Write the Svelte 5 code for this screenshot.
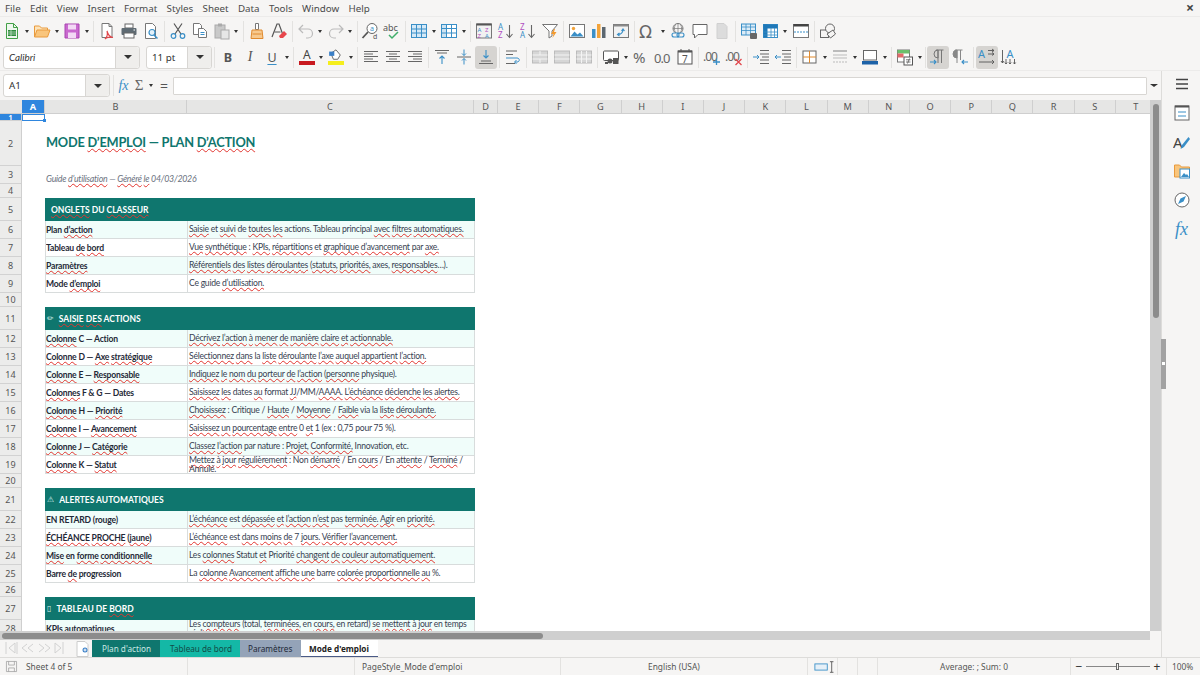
<script>
	// toolbar icons, 18x18 grid
	const icons = {
		new: '<path d="M3.500 1.500h7l4 4v11h-11z" fill="#eef7ee" stroke="#43a047"/><path d="M10.500 1.500v4h4" fill="none" stroke="#43a047"/><rect x="5" y="8" width="8" height="6" fill="#2e8b3d"/><path d="M5 10h8M5 12h8M8 8v6" stroke="#cfe8d2" stroke-width=".7"/>',
		open: '<path d="M1.500 15V4h5l2 2h6v2" fill="#fde3b8" stroke="#e99a3c"/><path d="M1.500 15 4 8h13l-2.500 7z" fill="#f9c57c" stroke="#e99a3c"/>',
		save: '<path d="M2 2h14v14H2z" fill="#c968cf" stroke="#a945b0"/><rect x="5" y="2.500" width="8" height="5" fill="#f3d9f5"/><rect x="5" y="10.500" width="8" height="5.500" fill="#f3d9f5"/>',
		pdf: '<path d="M4 1.500h7l3 3v11H4z" fill="#fff" stroke="#777"/><path d="M11 1.500v3h3" fill="none" stroke="#777"/><path d="M9 9c1 4 3 6 6 6.500-3-.5-7 0-8 1.500 2-2 3-5 2-8z" fill="none" stroke="#e0464a" stroke-width="1.200"/>',
		print: '<rect x="5" y="2" width="8" height="4" fill="#fff" stroke="#666"/><rect x="1.500" y="6" width="15" height="7" rx="1" fill="#5f6b73"/><rect x="4" y="11" width="10" height="5" fill="#fff" stroke="#666"/><path d="M13.500 8h1.500" stroke="#fff"/>',
		preview: '<path d="M3.500 1.500h7l3 3v12h-10z" fill="#fff" stroke="#777"/><circle cx="10" cy="10.500" r="3" fill="#e3f1fa" stroke="#3a8fc7" stroke-width="1.200"/><path d="m12 13 3.500 3.500" stroke="#3a8fc7" stroke-width="1.500"/>',
		cut: '<path d="M5 1.500 12 12M13 1.500 6 12" stroke="#555" stroke-width="1.200" fill="none"/><circle cx="4.500" cy="14" r="2.300" fill="none" stroke="#3a8fc7" stroke-width="1.200"/><circle cx="13.500" cy="14" r="2.300" fill="none" stroke="#3a8fc7" stroke-width="1.200"/>',
		copy: '<path d="M2.500 1.500h6l2 2v9h-8z" fill="#fff" stroke="#777"/><path d="M7.500 6.500h5l3 3v6h-8z" fill="#fff" stroke="#777"/><path d="M9.500 10.500h4M9.500 12.500h4" stroke="#3a8fc7"/>',
		paste: '<rect x="2" y="3" width="10" height="13" fill="#c9c9c9" stroke="#aaa"/><rect x="5" y="1.500" width="4" height="3" fill="#aaa"/><rect x="8" y="8" width="8" height="9" fill="#e6e6e6" stroke="#aaa"/>',
		clone: '<path d="M7.500 1.500h3v6h-3z" fill="#fff" stroke="#777"/><path d="M4 8h10l1 8.500H3z" fill="#f7c98e" stroke="#e08a2e"/><path d="M4.500 12h9" stroke="#e08a2e"/>',
		clear: '<path d="M2 15 7 2h2l4 11" fill="none" stroke="#555" stroke-width="1.200"/><path d="M4.500 10h6" stroke="#555"/><path d="m9 14 5-5 3 3-4 4h-3z" fill="#e8474c"/>',
		undo: '<path d="M6 3 2 7l4 4M2 7h9a4 4 0 0 1 0 9H9" fill="none" stroke="#bbb" stroke-width="1.200"/>',
		redo: '<path d="m12 3 4 4-4 4M16 7H7a4 4 0 0 0 0 9h2" fill="none" stroke="#bbb" stroke-width="1.200"/>',
		find: '<circle cx="11" cy="6.500" r="5" fill="#fff" stroke="#666"/><path d="M7 10 1.500 16" stroke="#555" stroke-width="1.800"/><text x="9" y="9" font-size="7" font-family="Noto Sans" fill="#3a8fc7">a</text><text x="12" y="17" font-size="7" font-family="Noto Sans" fill="#555">d</text>',
		spell: '<text x="0" y="9" font-size="9" font-family="Noto Sans" fill="#555">abc</text><path d="m6 13 3 3 6-6" fill="none" stroke="#3fae6a" stroke-width="1.500"/>',
		table: '<rect x="1.500" y="2.500" width="15" height="13" fill="#d5e9f7" stroke="#3a8fc7"/><path d="M1.500 7h15M1.500 11h15M6.500 2.500v13M11.500 2.500v13" stroke="#3a8fc7"/>',
		grid: '<rect x="1.500" y="2.500" width="15" height="13" fill="#fff" stroke="#3a8fc7"/><path d="M1.500 6.500h15M1.500 11h15M6.500 2.500v13M11.500 2.500v13" stroke="#3a8fc7"/><rect x="1.500" y="2.500" width="5" height="13" fill="#3a8fc7" opacity=".25"/>',
		sort: '<rect x="1.500" y="2" width="15" height="14" fill="#f1f1f1" stroke="#777"/><rect x="1.500" y="1.500" width="15" height="2" fill="#555"/><text x="2.500" y="10" font-size="6" font-family="Noto Sans" fill="#3a8fc7">A</text><text x="10" y="10" font-size="6" font-family="Noto Sans" fill="#b14fc0">Z</text><text x="2.500" y="15.500" font-size="6" font-family="Noto Sans" fill="#b14fc0">Z</text><text x="10" y="15.500" font-size="6" font-family="Noto Sans" fill="#3a8fc7">A</text>',
		sortaz: '<text x="1" y="8" font-size="8" font-family="Noto Sans" fill="#3a8fc7">A</text><text x="1" y="16" font-size="8" font-family="Noto Sans" fill="#b14fc0">Z</text><path d="M12.500 3v12M9.500 12l3 3.500 3-3.500" fill="none" stroke="#666" stroke-width="1.100"/>',
		sortza: '<text x="1" y="8" font-size="8" font-family="Noto Sans" fill="#b14fc0">Z</text><text x="1" y="16" font-size="8" font-family="Noto Sans" fill="#3a8fc7">A</text><path d="M12.500 3v12M9.500 12l3 3.500 3-3.500" fill="none" stroke="#666" stroke-width="1.100"/>',
		filter: '<path d="M1.500 2.500h15L11 9v5l-3 2V9z" fill="#fff" stroke="#777"/><path d="m13 7-3 5h2.500l-1 4 4-6h-2.500l1-3z" fill="#f29a2e"/>',
		image: '<rect x="1.500" y="2.500" width="15" height="13" fill="#fff" stroke="#777"/><path d="m2.500 14.500 4-5 3 3 2.500-2 3.500 4z" fill="#3a8fc7"/><circle cx="5.500" cy="6.500" r="1.700" fill="#f2a33a"/>',
		chart: '<rect x="2" y="7" width="3.500" height="9" fill="#3a8fc7"/><rect x="7" y="2" width="3.500" height="14" fill="#f2a33a"/><rect x="12" y="5" width="3.500" height="11" fill="#5c6770"/>',
		pivot: '<rect x="1.500" y="2.500" width="15" height="13" fill="#f2f2f2" stroke="#777"/><rect x="1.500" y="2.500" width="15" height="2" fill="#8a8a8a"/><path d="M6 12.500c3 0 5-2 5-5M9.500 9l1.500-2 1.500 2M7.500 11 5.500 12.500 7.500 14" fill="none" stroke="#3a8fc7" stroke-width="1.100"/>',
		omega: '<text x="0" y="15.500" font-size="17" font-family="DejaVu Sans" fill="#666">Ω</text>',
		link: '<circle cx="9" cy="6.500" r="5" fill="none" stroke="#777"/><path d="M4 6.500h10M9 1.500v10M6.500 2.500c-1.500 3-1.500 5 0 8M11.500 2.500c1.500 3 1.500 5 0 8" stroke="#777" stroke-width=".7" fill="none"/><rect x="3" y="11" width="7" height="4" rx="2" fill="#f6f5f4" stroke="#3a8fc7" stroke-width="1.100"/><rect x="8" y="11" width="7" height="4" rx="2" fill="none" stroke="#3a8fc7" stroke-width="1.100"/>',
		comment: '<path d="M2 2.500h14v10H7l-3.500 3.500v-3.500H2z" fill="#fff" stroke="#666"/>',
		headerfooter: '<path d="M4 1.500h7l3 3v12H4z" fill="#dcdcdc" stroke="#d0d0d0"/>',
		printrange: '<rect x="1.500" y="2" width="14" height="11" fill="#dcecf7" stroke="#3a8fc7"/><path d="M1.500 5h14M1.500 8.500h14M6 2v11M10.500 2v11" stroke="#3a8fc7" stroke-width=".8"/><rect x="10" y="11" width="7" height="6" rx="1" fill="#666"/>',
		freeze: '<rect x="1.500" y="2.500" width="14" height="13" fill="#fff" stroke="#3a8fc7"/><rect x="1.500" y="2.500" width="14" height="4" fill="#1f78b8"/><rect x="1.500" y="2.500" width="4" height="13" fill="#1f78b8"/><path d="M1.500 10h14M1.500 13h14M9 6v10M12.500 6v10" stroke="#3a8fc7" stroke-width=".8"/>',
		split: '<rect x="1.500" y="2.500" width="15" height="13" fill="#fff" stroke="#777"/><rect x="1.500" y="2" width="15" height="2.500" fill="#444"/><path d="M2 10h14" stroke="#3a8fc7" stroke-dasharray="2 1"/>',
		shapes: '<rect x="1.500" y="8" width="8" height="7.500" fill="none" stroke="#666"/><circle cx="11" cy="6.500" r="4.500" fill="#f6f5f4" stroke="#666"/><path d="m8 12 6-4 2.500 4-5 4z" fill="#f6f5f4" stroke="#666"/>',
		left: '<path d="M2 3.500h14M2 6h9M2 8.500h14M2 11h9M2 13.500h14" stroke="#666"/>',
		center: '<path d="M2 3.500h14M5 6h8M2 8.500h14M5 11h8M2 13.500h14" stroke="#666"/>',
		right: '<path d="M2 3.500h14M7 6h9M2 8.500h14M7 11h9M2 13.500h14" stroke="#666"/>',
		vtop: '<path d="M2 2.500h14M4 5h10" stroke="#666"/><path d="M9 16V8M6.500 10.500 9 8l2.500 2.500" fill="none" stroke="#3a8fc7" stroke-width="1.100"/>',
		vmid: '<path d="M2 9h14" stroke="#666"/><path d="M9 1.500v6M7 5.500l2 2 2-2M9 16.500v-6M7 12.500l2-2 2 2" fill="none" stroke="#3a8fc7"/>',
		vbot: '<path d="M2 15.500h14M4 13h10" stroke="#666"/><path d="M9 2v8M6.500 7.500 9 10l2.500-2.500" fill="none" stroke="#3a8fc7" stroke-width="1.100"/>',
		wrap: '<path d="M2 3h11M2 6.500h7M2 15.500h9" stroke="#666"/><path d="M2 10h11c3 0 3 4 0 4h-2M12.500 12 10.500 14l2 2" fill="none" stroke="#3a8fc7"/>',
		merge: '<rect x="1.500" y="3" width="15" height="12" fill="#d6d6d6" stroke="#bbb"/><path d="M1.500 7h15M1.500 11h15M9 3v4M9 11v4" stroke="#f4f4f4"/>',
		merge2: '<rect x="1.500" y="3" width="15" height="12" fill="#d6d6d6" stroke="#bbb"/><path d="M1.500 7h15M1.500 11h15" stroke="#f4f4f4"/>',
		merge3: '<rect x="1.500" y="3" width="15" height="12" fill="#d6d6d6" stroke="#bbb"/><path d="M1.500 7h15M1.500 11h15M6.500 3v12M11.500 3v12" stroke="#f4f4f4"/>',
		currency: '<rect x="1.500" y="3" width="15" height="9.500" rx="1" fill="#fff" stroke="#555"/><circle cx="8" cy="13" r="2.500" fill="#555"/><rect x="11" y="10" width="5.500" height="6" fill="#555"/><path d="M3 15h3" stroke="#555" stroke-width="2"/>',
		percent: '<text x="1" y="15" font-size="15" font-family="Noto Sans" fill="#666">%</text>',
		number: '<text x="0" y="14.500" font-size="13" font-family="Noto Sans" letter-spacing="-1" fill="#666">0.0</text>',
		date: '<rect x="2" y="3" width="14" height="13" fill="#fff" stroke="#555"/><rect x="2" y="2.500" width="14" height="2" fill="#555"/><path d="M5 1v3M13 1v3" stroke="#555"/><text x="6" y="14.500" font-size="10" font-family="Noto Sans" fill="#555">7</text>',
		adddec: '<text x="0" y="13" font-size="12" font-family="Noto Sans" letter-spacing="-1" fill="#666">.00</text><path d="M13.500 10.500v6.500M10 14h7" stroke="#3a8fc7" stroke-width="1.300"/>',
		deldec: '<text x="0" y="13" font-size="12" font-family="Noto Sans" letter-spacing="-1" fill="#666">.00</text><path d="m10.500 11 6 6M16.500 11l-6 6" stroke="#e2474c" stroke-width="1.300"/>',
		indent: '<path d="M8 2.500h9M8 6h9M10 9h7M8 12h9M8 15.500h9" stroke="#666"/><path d="M1 9h6M5 7l2 2-2 2" fill="none" stroke="#3a8fc7"/>',
		outdent: '<path d="M8 2.500h9M8 6h9M10 9h7M8 12h9M8 15.500h9" stroke="#666"/><path d="M7 9H1M3 7 1 9l2 2" fill="none" stroke="#3a8fc7"/>',
		borders: '<rect x="2" y="3" width="13" height="12" fill="#fff" stroke="#666"/><path d="M8.500 3v12M2 9h13" stroke="#e08a2e"/>',
		borderstyle: '<path d="M2 3h14" stroke="#bbb" stroke-width="2"/><path d="M2 7h14M2 10h14" stroke="#bbb"/><path d="M2 14h14" stroke="#bbb" stroke-dasharray="2 1"/>',
		bordercolor: '<rect x="2.500" y="2.500" width="13" height="9.500" fill="#fff" stroke="#666"/><rect x="1" y="13" width="16" height="3.500" fill="#1d62a8"/>',
		cond: '<rect x="1.500" y="2" width="12" height="12" fill="#fff" stroke="#777"/><rect x="1.500" y="2" width="12" height="3.500" fill="#6cbf6c"/><rect x="1.500" y="5.500" width="6" height="4" fill="#e26a6a"/><rect x="8" y="9" width="8.500" height="8" fill="#fff" stroke="#555"/><path d="M10 11.800h4.500M10 14h4.500M13.500 10.500l-2 5" stroke="#555" stroke-width=".8"/>',
		ltr: '<path d="M9 2v13M12.500 2v13M7 2h7.500" fill="none" stroke="#777"/><path d="M9 2a4 4 0 0 0 0 8z" fill="none" stroke="#777"/><path d="M1 14h6M5 12l2 2-2 2" fill="none" stroke="#3a8fc7" stroke-width="1.100"/>',
		rtl: '<path d="M6 2v13M9.500 2v10M4 2h7.500" fill="none" stroke="#888"/><path d="M6 2a4 4 0 0 0 0 8z" fill="#888" stroke="#888"/><path d="M17 14h-6M13 12l-2 2 2 2" fill="none" stroke="#3a8fc7" stroke-width="1.100"/>',
		horiz: '<text x="0" y="10" font-size="11" font-family="Noto Sans" fill="#3a8fc7">A</text><path d="M10 2.500h6M14 1l2 1.500L14 4M10 6h6M14 4.500 16 6l-2 1.500M1 14h15M14 12l2 2-2 2" fill="none" stroke="#555" stroke-width=".9"/>',
		vert: '<text x="6.500" y="10" font-size="11" font-family="Noto Sans" fill="#3a8fc7">A</text><path d="M2.500 2v13M1 13l1.500 2L4 13M6 11v5M4.800 14.500 6 16l1.200-1.500M10 11v5M8.800 14.500 10 16l1.200-1.500M14.500 11v5M13.300 14.500l1.200 1.500 1.200-1.500" fill="none" stroke="#555" stroke-width=".9"/>',
		deck: '<path d="M3 4.500h12M3 9h12M3 13.500h12" stroke="#444" stroke-width="1.600"/>',
		props: '<rect x="2" y="2" width="14" height="14" fill="#fff" stroke="#666"/><rect x="2" y="1.500" width="14" height="2" fill="#555"/><path d="M5 8h8M5 12h8" stroke="#3a8fc7"/>',
		styles: '<text x="0" y="15" font-size="15" font-family="Noto Sans" fill="#444">A</text><path d="m16.500 3-6.500 8-1.500 4 3.500-2 6-8z" fill="#3a8fc7" transform="translate(-1 1)"/>',
		gallery: '<path d="M1.500 15V3h5l2 2h8v10z" fill="#f9c57c" stroke="#e99a3c"/><rect x="7" y="7" width="9.500" height="9" fill="#fff" stroke="#3a8fc7"/><path d="m8 15 3-4 2 2 1-1 2 3z" fill="#3a8fc7"/>',
		navigator: '<circle cx="9" cy="9" r="7" fill="#fff" stroke="#666"/><path d="m13 5-2.500 5.500L5 13l2.500-5.500z" fill="#3a8fc7"/>',
		pagesave: '<path d="M2 2h14v14H2z" fill="none" stroke="#9a9a9a"/><path d="M5 2v5h8V2M5 16v-5h8v5" fill="none" stroke="#9a9a9a"/>'
	};

	const bar1 = ['new', '>', 'open', '>', 'save', '>', '|', 'pdf', 'print', 'preview', '|', 'cut', 'copy', 'paste', '>', '|', 'clone', 'clear', '|', 'undo', '>', 'redo', '>', '|', 'find', 'spell', '|', 'table', '>', 'grid', '>', '|', 'sort', 'sortaz', 'sortza', 'filter', '|', 'image', 'chart', 'pivot', '|', 'omega', '>', 'link', 'comment', 'headerfooter', '|', 'printrange', 'freeze', '>', 'split', '|', 'shapes'];
	const bar2a = ['left', 'center', 'right', '|', 'vtop', 'vmid', 'vbot!', '|', 'wrap', '|', 'merge', 'merge2', 'merge3', '|', 'currency', '>', 'percent', 'number', 'date', '|', 'adddec', 'deldec', '|', 'indent', 'outdent', '|', 'borders', '>', 'borderstyle', '>', 'bordercolor', '>', '|', 'cond', '>', '~', 'ltr!', 'rtl', '|', 'horiz!', 'vert'];

	const menus = ['File', 'Edit', 'View', 'Insert', 'Format', 'Styles', 'Sheet', 'Data', 'Tools', 'Window', 'Help'];
	const columns = ['E', 'F', 'G', 'H', 'I', 'J', 'K', 'L', 'M', 'N', 'O', 'P', 'Q', 'R', 'S', 'T'];

	const rowHeights = [7, 45, 18, 14, 23, 18, 18, 18, 18, 14, 23, 18, 18, 18, 18, 18, 18, 18, 18, 14, 23, 18, 18, 18, 18, 14, 23, 18];

	// *word* = flagged by the spell checker
	const sections = [
		{
			title: '*ONGLETS* DU *CLASSEUR*',
			rows: [
				['Plan *d’action*', '*Saisie* et *suivi* de *toutes* *les* actions. Tableau principal *avec* *filtres* *automatiques.*'],
				['Tableau *de* *bord*', '*Vue* *synthétique* : *KPIs,* *répartitions* et *graphique* *d’avancement* par *axe.*'],
				['*Paramètres*', '*Référentiels* *des* *listes* *déroulantes* (*statuts,* *priorités,* axes, *responsables*…).'],
				['Mode *d’emploi*', 'Ce guide *d’utilisation.*']
			]
		},
		{
			icon: '✏',
			title: '*SAISIE* *DES* ACTIONS',
			rows: [
				['*Colonne* C — Action', '*Décrivez* *l’action* *à* *mener* *de* *manière* *claire* *et* *actionnable.*'],
				['*Colonne* D — *Axe* *stratégique*', '*Sélectionnez* *dans* la *liste* *déroulante* *l’axe* *auquel* *appartient* *l’action.*'],
				['*Colonne* E — *Responsable*', '*Indiquez* *le* *nom* *du* *porteur* *de* *l’action* (*personne* physique).'],
				['*Colonnes* F & G — Dates', '*Saisissez* *les* dates *au* format *JJ*/MM/*AAAA.* *L’échéance* *déclenche* *les* *alertes.*'],
				['*Colonne* H — *Priorité*', '*Choisissez* : Critique / *Haute* / *Moyenne* / *Faible* via la *liste* *déroulante.*'],
				['*Colonne* I — *Avancement*', '*Saisissez* *un* *pourcentage* *entre* 0 *et* 1 (ex : 0,75 pour 75 %).'],
				['*Colonne* J — *Catégorie*', '*Classez* *l’action* par nature : *Projet,* *Conformité,* Innovation, etc.'],
				['*Colonne* K — *Statut*', '*Mettez* *à* *jour* *régulièrement* : Non *démarré* / En *cours* / En *attente* / *Terminé* / *Annulé.*']
			]
		},
		{
			icon: '⚠',
			title: 'ALERTES AUTOMATIQUES',
			rows: [
				['EN RETARD (rouge)', '*L’échéance* est *dépassée* *et* *l’action* *n’est* pas *terminée.* *Agir* en *priorité.*'],
				['*ÉCHÉANCE* *PROCHE* (*jaune*)', '*L’échéance* est *dans* *moins* *de* 7 *jours.* *Vérifier* *l’avancement.*'],
				['*Mise* en *forme* *conditionnelle*', 'Les *colonnes* Statut *et* Priorité *changent* *de* *couleur* *automatiquement.*'],
				['Barre *de* progression', 'La *colonne* *Avancement* *affiche* *une* barre *colorée* *proportionnelle* *au* %.']
			]
		},
		{
			icon: '▯',
			title: 'TABLEAU DE *BORD*',
			rows: [
				['*KPIs* *automatiques*', 'Les *compteurs* (total, *terminées,* en *cours,* en retard) *se* *mettent* *à* *jour* en temps *réel.*']
			]
		}
	];

	const tabs = [
		{ label: 'Plan d\'action', cls: 'plan' },
		{ label: 'Tableau de bord', cls: 'board' },
		{ label: 'Paramètres', cls: 'params' },
		{ label: 'Mode d\'emploi', cls: 'active' }
	];

	function parts(text) {
		return text.split('*').map((t, i) => ({ t, bad: i % 2 === 1 }));
	}
</script>

{#snippet marked(text)}
	{#each parts(text) as p}{#if p.bad}<span class="sp">{p.t}</span>{:else}{p.t}{/if}{/each}
{/snippet}

{#snippet icon(name, cls = '')}
	<svg class={cls} viewBox="0 0 18 18" width="18" height="18" aria-hidden="true">{@html icons[name]}</svg>
{/snippet}

{#snippet toolitems(list)}
	{#each list as item}
		{#if item === '|'}
			<span class="sep"></span>
		{:else if item === '~'}
			<span class="sep narrow"></span>
		{:else if item === '>'}
			<span class="arrow"></span>
		{:else}
			<span class="tool" class:on={item.endsWith('!')}>
				{@render icon(item.replace('!', ''))}
			</span>
		{/if}
	{/each}
{/snippet}

<div class="app">
	<header class="menubar">
		<nav class="menus">
			{#each menus as m}<span>{m}</span>{/each}
		</nav>
		<span class="close">×</span>
	</header>

	<div class="toolbar first">
		{@render toolitems(bar1)}
	</div>

	<div class="toolbar second">
		<div class="combo font"><span class="value">Calibri</span><span class="drop"><i></i></span></div>
		<div class="combo size"><span class="value">11 pt</span><span class="drop"><i></i></span></div>
		<span class="sep"></span>
		<span class="tool txt bold">B</span>
		<span class="tool txt ital">I</span>
		<span class="tool txt under">U</span>
		<span class="arrow"></span>
		<span class="sep"></span>
		<span class="tool swatch">
			<span class="letter">A</span><b class="red"></b>
		</span>
		<span class="arrow"></span>
		<span class="tool swatch">
			<svg viewBox="0 0 18 14" width="16" height="12" aria-hidden="true"><path d="M3 5l6-4 5 6-3 5H6z" fill="#fff" stroke="#555"/><rect x="1" y="3" width="6" height="5" fill="#3a7fc7"/></svg>
			<b class="yellow"></b>
		</span>
		<span class="arrow"></span>
		<span class="sep"></span>
		{@render toolitems(bar2a)}
	</div>

	<div class="workspace">
		<div class="left">
			<div class="formula">
				<div class="combo name"><span class="value">A1</span><span class="drop"><i></i></span></div>
				<span class="sep"></span>
				<span class="fx">fx</span>
				<span class="sigma">Σ</span>
				<span class="arrow"></span>
				<span class="equals">=</span>
				<div class="input"></div>
				<span class="arrow wide"></span>
			</div>

			<div class="sheetarea">
				<div class="grid">
					<div class="colheads">
						<span class="corner"></span>
						<span class="ch sel cola">A</span>
						<span class="ch colb">B</span>
						<span class="ch colc">C</span>
						<span class="ch cold">D</span>
						{#each columns as c}<span class="ch">{c}</span>{/each}
					</div>
					<div class="body">
						<div class="rowheads">
							{#each rowHeights as h, i}
								<span class="rh" class:sel={i === 0} style="height: {h}px">{i + 1}</span>
							{/each}
						</div>
						<div class="cells">
							<div class="cursor"></div>
							<h1 class="title">
								MODE <span class="sp">D’EMPLOI</span> — PLAN <span class="sp">D’ACTION</span>
							</h1>
							<p class="subtitle">Guide <span class="sp">d’utilisation</span> — <span class="sp">Généré</span> <span class="sp">le</span> 04/03/2026</p>
							{#each sections as s}
								<section class="block">
									<div class="band">
										{#if s.icon}<span class="glyph">{s.icon}</span>{/if}
										<span>{@render marked(s.title)}</span>
									</div>
									{#each s.rows as row}
										<div class="row">
											<div class="label">{@render marked(row[0])}</div>
											<div class="desc"><span>{@render marked(row[1])}</span></div>
										</div>
									{/each}
								</section>
							{/each}
						</div>
					</div>
				</div>
				<div class="vscroll"><span class="thumb"></span></div>
			</div>

			<div class="hscroll"><span class="thumb"></span></div>

			<div class="tabbar">
				<div class="nav">
					<svg viewBox="0 0 62 14" width="62" height="14" aria-hidden="true">
						<g fill="none" stroke="#d2d2d2">
							<path d="M1 1v12M10 2 4 7l6 5zM12 1v12"/>
							<path d="M22 3l-5 4 5 4M28 3l-5 4 5 4"/>
							<path d="M34 3l5 4-5 4M40 3l5 4-5 4"/>
							<path d="M50 2l6 5-6 5zM58 1v12"/>
						</g>
					</svg>
				</div>
				<div class="addsheet">
					<svg viewBox="0 0 16 16" width="16" height="16" aria-hidden="true"><path d="M2 .5h8l3 3v12H2z" fill="#fff" stroke="#ccc"/><circle cx="10" cy="9" r="2.500" fill="#3a7fc7"/><path d="M8.500 9h3M10 7.500v3" stroke="#fff"/></svg>
				</div>
				{#each tabs as tab}
					<span class="tab {tab.cls}">{tab.label}</span>
				{/each}
			</div>
		</div>

		<aside class="sidebar">
			<span class="handle"></span>
			{@render icon('deck')}
			{@render icon('props')}
			{@render icon('styles')}
			{@render icon('gallery')}
			{@render icon('navigator')}
			<span class="side-fx">fx</span>
		</aside>
	</div>

	<footer class="status">
		<span class="st s1">{@render icon('pagesave', 'small')}<span>Sheet 4 of 5</span></span>
		<span class="st s2"></span>
		<span class="st s3">PageStyle_Mode d'emploi</span>
		<span class="st s4">English (USA)</span>
		<span class="st s5">
			<svg viewBox="0 0 26 14" width="26" height="14" aria-hidden="true"><rect x="1" y="3.500" width="14" height="7" fill="#e6f0f8" stroke="#3a8fc7"/><path d="M18 1h4M20 1v12M18 13h4" stroke="#555" fill="none"/></svg>
		</span>
		<span class="st s6"></span>
		<span class="st s6"></span>
		<span class="st s7">Average: ; Sum: 0</span>
		<span class="st s8">
			<span class="zoomsign">−</span>
			<span class="slider"><i></i></span>
			<span class="zoomsign">+</span>
		</span>
		<span class="st s9">100%</span>
	</footer>
</div>

<style>
	:global(body) {
		margin: 0;
		background: #f6f5f4;
	}

	.app {
		width: 1200px;
		height: 675px;
		display: flex;
		flex-direction: column;
		overflow: hidden;
		background: #f6f5f4;
		color: #444;
		font-family: 'Noto Sans', 'Open Sans', sans-serif;
		font-size: 9.5px;
	}

	.menubar {
		height: 17px;
		flex: none;
		display: flex;
		align-items: center;
		justify-content: space-between;
		padding: 0 5px;
		border-bottom: 1px solid #ecebea;
		box-sizing: border-box;
	}

	.menus {
		display: flex;
		gap: 9.3px;
		font-size: 9.8px;
		color: #4b4b4b;
	}

	.close {
		font-size: 14px;
		font-weight: 700;
		line-height: 1;
		color: #444;
		margin-right: 1px;
	}

	.toolbar {
		flex: none;
		display: flex;
		align-items: center;
		box-sizing: border-box;
	}

	.toolbar.first {
		height: 27px;
		padding-left: 1px;
		padding-top: 1px;
	}

	.toolbar.second {
		height: 27px;
		padding-left: 3px;
		border-bottom: 1px solid #ecebea;
	}

	.tool {
		width: 22px;
		height: 23px;
		flex: none;
		display: flex;
		flex-direction: column;
		align-items: center;
		justify-content: center;
		border-radius: 3px;
	}

	.tool.on {
		background: #d6d4d1;
	}

	.arrow {
		width: 8px;
		height: 23px;
		flex: none;
		position: relative;
	}

	.arrow::after {
		content: '';
		position: absolute;
		left: 1.5px;
		top: 10px;
		border: 2.5px solid transparent;
		border-top: 3px solid #333;
		border-bottom: 0;
	}

	.arrow.wide {
		width: 14px;
	}

	.arrow.wide::after {
		left: 3px;
		border-width: 3.5px 4px 0;
	}

	.sep {
		width: 5px;
		height: 23px;
		flex: none;
		position: relative;
	}

	.sep.narrow {
		width: 3px;
	}

	.sep::after {
		content: '';
		position: absolute;
		left: 2px;
		top: 1px;
		bottom: 1px;
		width: 1px;
		background: #e3e2e0;
	}

	.sep.narrow::after {
		left: 1px;
	}

	.toolbar.first .sep {
		width: 4.9px;
	}

	.toolbar.second .tool.swatch {
		width: 21.500px;
	}

	.combo {
		height: 23px;
		flex: none;
		display: flex;
		box-sizing: border-box;
		background: #fff;
		border: 1px solid #d8d6d3;
		border-radius: 3px;
		color: #333;
	}

	.combo .value {
		flex: 1;
		padding-left: 5px;
		line-height: 21px;
		font-size: 9.8px;
	}

	.combo .drop {
		flex: none;
		width: 23px;
		display: flex;
		align-items: center;
		justify-content: center;
		background: #efeeec;
		border-left: 1px solid #d8d6d3;
		border-radius: 0 3px 3px 0;
	}

	.combo .drop i {
		border: 4px solid transparent;
		border-top: 4px solid #333;
		border-bottom: 0;
	}

	.combo.font {
		width: 137px;
		margin-right: 6px;
	}

	.combo.font .value {
		font-style: italic;
		font-family: Lato, sans-serif;
	}

	.combo.size {
		width: 66px;
	}

	.tool.txt {
		font-size: 12.5px;
		color: #555;
	}

	.bold {
		font-weight: 700;
	}

	.tool.ital {
		font-family: 'Liberation Serif', serif;
		font-style: italic;
		font-size: 14px;
	}

	.under {
		text-decoration: underline;
		text-decoration-color: #3a8fc7;
		text-underline-offset: 2px;
	}

	.swatch .letter {
		font-size: 12px;
		line-height: 12px;
		color: #444;
	}

	.swatch b {
		display: block;
		width: 16px;
		height: 4px;
	}

	.red {
		background: #c8191f;
	}

	.yellow {
		background: #f5ee1c;
	}

	.workspace {
		flex: 1;
		min-height: 0;
		display: flex;
	}

	.left {
		width: 1161px;
		flex: none;
		display: flex;
		flex-direction: column;
		min-height: 0;
	}

	.formula {
		height: 29px;
		flex: none;
		display: flex;
		align-items: center;
		padding-left: 3px;
		box-sizing: border-box;
	}

	.combo.name {
		width: 107px;
		margin-right: 1px;
	}

	.fx,
	.side-fx {
		font-family: 'Liberation Serif', serif;
		font-style: italic;
		color: #3a8fc7;
	}

	.fx {
		width: 15px;
		text-align: center;
		font-size: 14px;
	}

	.sigma {
		width: 16px;
		text-align: center;
		font-family: 'Liberation Serif', serif;
		font-size: 15px;
		color: #666;
	}

	.equals {
		width: 18px;
		text-align: center;
		font-size: 14px;
		color: #555;
	}

	.input {
		flex: 1;
		height: 16px;
		background: #fff;
		border: 1px solid #d8d6d3;
		border-radius: 1px;
	}

	.sheetarea {
		flex: 1;
		min-height: 0;
		display: flex;
	}

	.grid {
		width: 1150px;
		flex: none;
		display: flex;
		flex-direction: column;
		min-height: 0;
		background: #fff;
	}

	.colheads {
		height: 14px;
		flex: none;
		display: flex;
		background: #e6e6e5;
		border-bottom: 1px solid #cfcfcf;
		box-sizing: border-box;
		color: #555;
	}

	.corner {
		width: 22px;
		flex: none;
	}

	.ch {
		width: 41.2px;
		flex: none;
		box-sizing: border-box;
		text-align: center;
		line-height: 13px;
		border-right: 1px solid #cfcfcf;
		font-size: 9.2px;
	}

	.ch.sel {
		background: #2f86de;
		color: #fff;
		font-weight: 700;
	}

	.cola {
		width: 23px;
	}

	.colb {
		width: 142px;
	}

	.colc {
		width: 287px;
	}

	.cold {
		width: 24px;
	}

	.body {
		flex: 1;
		min-height: 0;
		display: flex;
		overflow: hidden;
	}

	.rowheads {
		width: 22px;
		flex: none;
		display: flex;
		flex-direction: column;
		background: #ececeb;
		border-right: 1px solid #cfcfcf;
		box-sizing: border-box;
	}

	.rh {
		flex: none;
		display: flex;
		align-items: center;
		justify-content: center;
		box-sizing: border-box;
		border-bottom: 1px solid #d2d2d2;
		font-size: 9px;
		color: #555;
		line-height: 1;
		overflow: hidden;
	}

	.rh.sel {
		background: #2f86de;
		color: #fff;
		font-size: 7px;
		font-weight: 700;
	}

	.cells {
		position: relative;
		flex: 1;
		padding-left: 23px;
		padding-top: 7px;
		font-family: Lato, 'Liberation Sans', sans-serif;
		color: #374151;
	}

	.cursor {
		position: absolute;
		left: 0;
		top: 0;
		width: 23px;
		height: 7px;
		box-sizing: border-box;
		border: 1px solid #2f86de;
	}

	.cursor::after {
		content: '';
		position: absolute;
		right: -2px;
		bottom: -2px;
		width: 3px;
		height: 3px;
		background: #2f86de;
	}

	.sp {
		text-decoration: underline wavy #e2352f;
		text-decoration-thickness: 0.6px;
		text-decoration-skip-ink: none;
		text-underline-offset: 1px;
	}

	.title {
		margin: 0;
		height: 45px;
		box-sizing: border-box;
		padding-top: 14px;
		padding-left: 1px;
		font-size: 12.8px;
		line-height: 14px;
		font-weight: 700;
		letter-spacing: -0.25px;
		color: #0f766e;
	}

	.subtitle {
		margin: 0 0 14px;
		height: 18px;
		padding-left: 1px;
		line-height: 26px;
		font-size: 8.8px;
		font-style: italic;
		letter-spacing: -0.25px;
		color: #6b7280;
	}

	.block {
		width: 430px;
		margin-bottom: 14px;
		border-left: 1px solid #d8dcdc;
		border-right: 1px solid #d8dcdc;
		box-sizing: border-box;
	}

	.band {
		height: 23px;
		margin: 0 -1px;
		display: flex;
		align-items: center;
		gap: 5px;
		padding-left: 6px;
		background: #0f766e;
		color: #fff;
		font-size: 8.5px;
		font-weight: 700;
	}

	.glyph {
		margin-left: -4px;
		font-family: 'DejaVu Sans', sans-serif;
		font-size: 8px;
		font-weight: 400;
		color: #d5ece9;
	}

	.row {
		height: 18px;
		display: flex;
		box-sizing: border-box;
		border-bottom: 1px solid #d8dcdc;
		background: #fff;
		font-size: 8.6px;
		letter-spacing: -0.25px;
	}

	.row:nth-child(even) {
		background: #f0fdfa;
	}

	.label {
		width: 142px;
		flex: none;
		box-sizing: border-box;
		line-height: 18px;
		font-size: 8.6px;
		font-weight: 700;
		letter-spacing: -0.2px;
		color: #1f2937;
		border-right: 1px solid #d8dcdc;
		white-space: nowrap;
		overflow: hidden;
	}

	.desc {
		flex: 1;
		min-width: 0;
		display: flex;
		align-items: center;
		padding: 0 1px;
		line-height: 9px;
		overflow: hidden;
	}

	.vscroll {
		width: 11px;
		flex: none;
		background: #cfcfcf;
		display: flex;
		justify-content: center;
		padding-top: 4px;
		box-sizing: border-box;
	}

	.vscroll .thumb {
		width: 6px;
		height: 214px;
		border-radius: 3px;
		background: #8c8c8c;
	}

	.hscroll {
		height: 9px;
		flex: none;
		width: 1150px;
		background: #cfcfcf;
		display: flex;
		align-items: center;
		padding-left: 2px;
		box-sizing: border-box;
	}

	.hscroll .thumb {
		width: 541px;
		height: 6px;
		border-radius: 3px;
		background: #8c8c8c;
	}

	.tabbar {
		height: 17px;
		flex: none;
		display: flex;
		align-items: stretch;
	}

	.nav {
		width: 75px;
		flex: none;
		box-sizing: border-box;
		padding: 1px 0 0 5px;
	}

	.addsheet {
		width: 17px;
		flex: none;
		padding-top: 1px;
	}

	.tab {
		box-sizing: border-box;
		padding: 0 10px;
		line-height: 17px;
		font-size: 8.2px;
		white-space: nowrap;
		overflow: hidden;
	}

	.tab.plan {
		width: 68px;
		background: #0f766e;
		color: #c9e8e4;
	}

	.tab.board {
		width: 80px;
		background: #14b8a6;
		color: #124c46;
	}

	.tab.params {
		width: 61px;
		background: #94a3b8;
		color: #1f2937;
		padding: 0 8px;
	}

	.tab.active {
		width: 77px;
		background: #fff;
		color: #222;
		font-weight: 700;
		border-bottom: 1px solid #4a5a86;
		padding: 0 8px;
	}

	.sidebar {
		position: relative;
		flex: 1;
		display: flex;
		flex-direction: column;
		align-items: center;
		gap: 11px;
		padding: 4px 0 0 1px;
		border-left: 1px solid #dddcda;
	}

	.sidebar svg {
		flex: none;
	}

	.handle {
		position: absolute;
		left: -1px;
		top: 268px;
		width: 5px;
		height: 50px;
		background: #a2a2a2;
	}

	.handle::after {
		content: '';
		position: absolute;
		left: 1px;
		top: 23px;
		width: 3px;
		height: 3px;
		background: #fff;
	}

	.side-fx {
		font-size: 18px;
		line-height: 18px;
	}

	.status {
		height: 17px;
		flex: none;
		display: flex;
		align-items: stretch;
		border-top: 1px solid #dddcda;
		box-sizing: content-box;
		color: #555;
		font-size: 8.4px;
	}

	.st {
		box-sizing: border-box;
		display: flex;
		align-items: center;
		flex: none;
		border-right: 1px solid #e3e2e0;
		white-space: nowrap;
	}

	.st :global(svg.small) {
		width: 13px;
		height: 13px;
		margin: 0 8px 0 5px;
	}

	.s1 {
		width: 188px;
	}

	.s2 {
		width: 167px;
	}

	.s3 {
		width: 206px;
		padding-left: 7px;
	}

	.s4 {
		width: 247px;
		padding-left: 87px;
	}

	.s5 {
		width: 30px;
		padding-left: 6px;
	}

	.s6 {
		width: 20px;
	}

	.s7 {
		width: 193px;
		justify-content: center;
	}

	.s8 {
		width: 96px;
		gap: 2px;
		padding-left: 3px;
	}

	.zoomsign {
		width: 10px;
		text-align: center;
		font-size: 12px;
		color: #333;
	}

	.slider {
		width: 64px;
		height: 1px;
		background: #888;
		position: relative;
	}

	.slider i {
		position: absolute;
		left: 30px;
		top: -3px;
		width: 3px;
		height: 7px;
		box-sizing: border-box;
		border: 1px solid #666;
		background: #f6f5f4;
	}

	.s9 {
		border-right: 0;
		padding-left: 5px;
	}
</style>
